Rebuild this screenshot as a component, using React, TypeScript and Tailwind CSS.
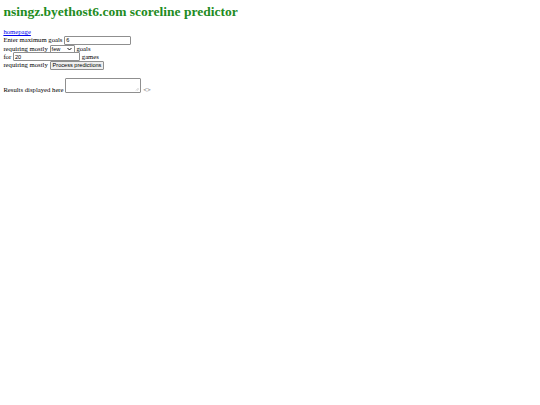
const serif = "font-['Liberation_Serif','Times_New_Roman',serif]";
const sans = "font-['Liberation_Sans',Arial,sans-serif]";

function TextBox({ value, w }: { value: string; w: string }) {
  return (
    <span
      className={`inline-flex items-center ${w} h-[9px] border border-[#8f8f8f] rounded-[1px] bg-white px-[1px] text-[5.6px] text-black ${sans}`}
    >
      {value}
    </span>
  );
}

export default function App() {
  return (
    <div className={`min-h-screen bg-white text-black px-[3.4px] ${serif}`}>
      <h1 className="pt-[3px] text-[13.5px] leading-[17px] font-bold text-[#228b22]">
        nsingz.byethost6.com scoreline predictor
      </h1>

      <div className="mt-[8px] text-[6.7px] leading-[8.3px]">
        <a href="#" className="text-[#0000ee] underline">
          homepage
        </a>
        <div className="flex items-center gap-[1.8px] h-[8.3px]">
          <span>Enter maximum goals</span>
          <TextBox value="6" w="w-[67px]" />
        </div>
        <div className="flex items-center gap-[1.8px] h-[8.2px]">
          <span>requiring mostly</span>
          <span
            className={`inline-flex items-center justify-between w-[25px] h-[8px] border border-[#8f8f8f] rounded-[1px] bg-white px-[1px] text-[5.6px] ${sans}`}
          >
            few
            <svg width="5" height="4" viewBox="0 0 10 8" className="mr-[1px]">
              <path d="M1 2 L5 6 L9 2" fill="none" stroke="#000" strokeWidth="1.8" />
            </svg>
          </span>
          <span>goals</span>
        </div>
        <div className="flex items-center gap-[1.8px] h-[8.3px]">
          <span>for</span>
          <TextBox value="20" w="w-[67px]" />
          <span>games</span>
        </div>
        <div className="flex items-center gap-[1.8px] h-[8.6px]">
          <span>requiring mostly</span>
          <button
            className={`h-[9px] px-[2px] border border-[#8f8f8f] rounded-[1px] bg-[#efefef] text-[5.6px] leading-none text-black ${sans}`}
          >
            Process predictions
          </button>
        </div>

        <div className="mt-[8px] flex items-end gap-[1.8px]">
          <span className="leading-[7px]">Results displayed here</span>
          <span className="relative w-[76px] h-[15px] border border-[#8f8f8f] rounded-[1px] bg-white">
            <svg width="4" height="4" viewBox="0 0 8 8" className="absolute right-[1px] bottom-[1px]">
              <path d="M7 2 L2 7 M7 5 L5 7" stroke="#999" strokeWidth="1" />
            </svg>
          </span>
          <span className="leading-[7px] text-[#555]">&lt;&gt;</span>
        </div>
      </div>
    </div>
  );
}
